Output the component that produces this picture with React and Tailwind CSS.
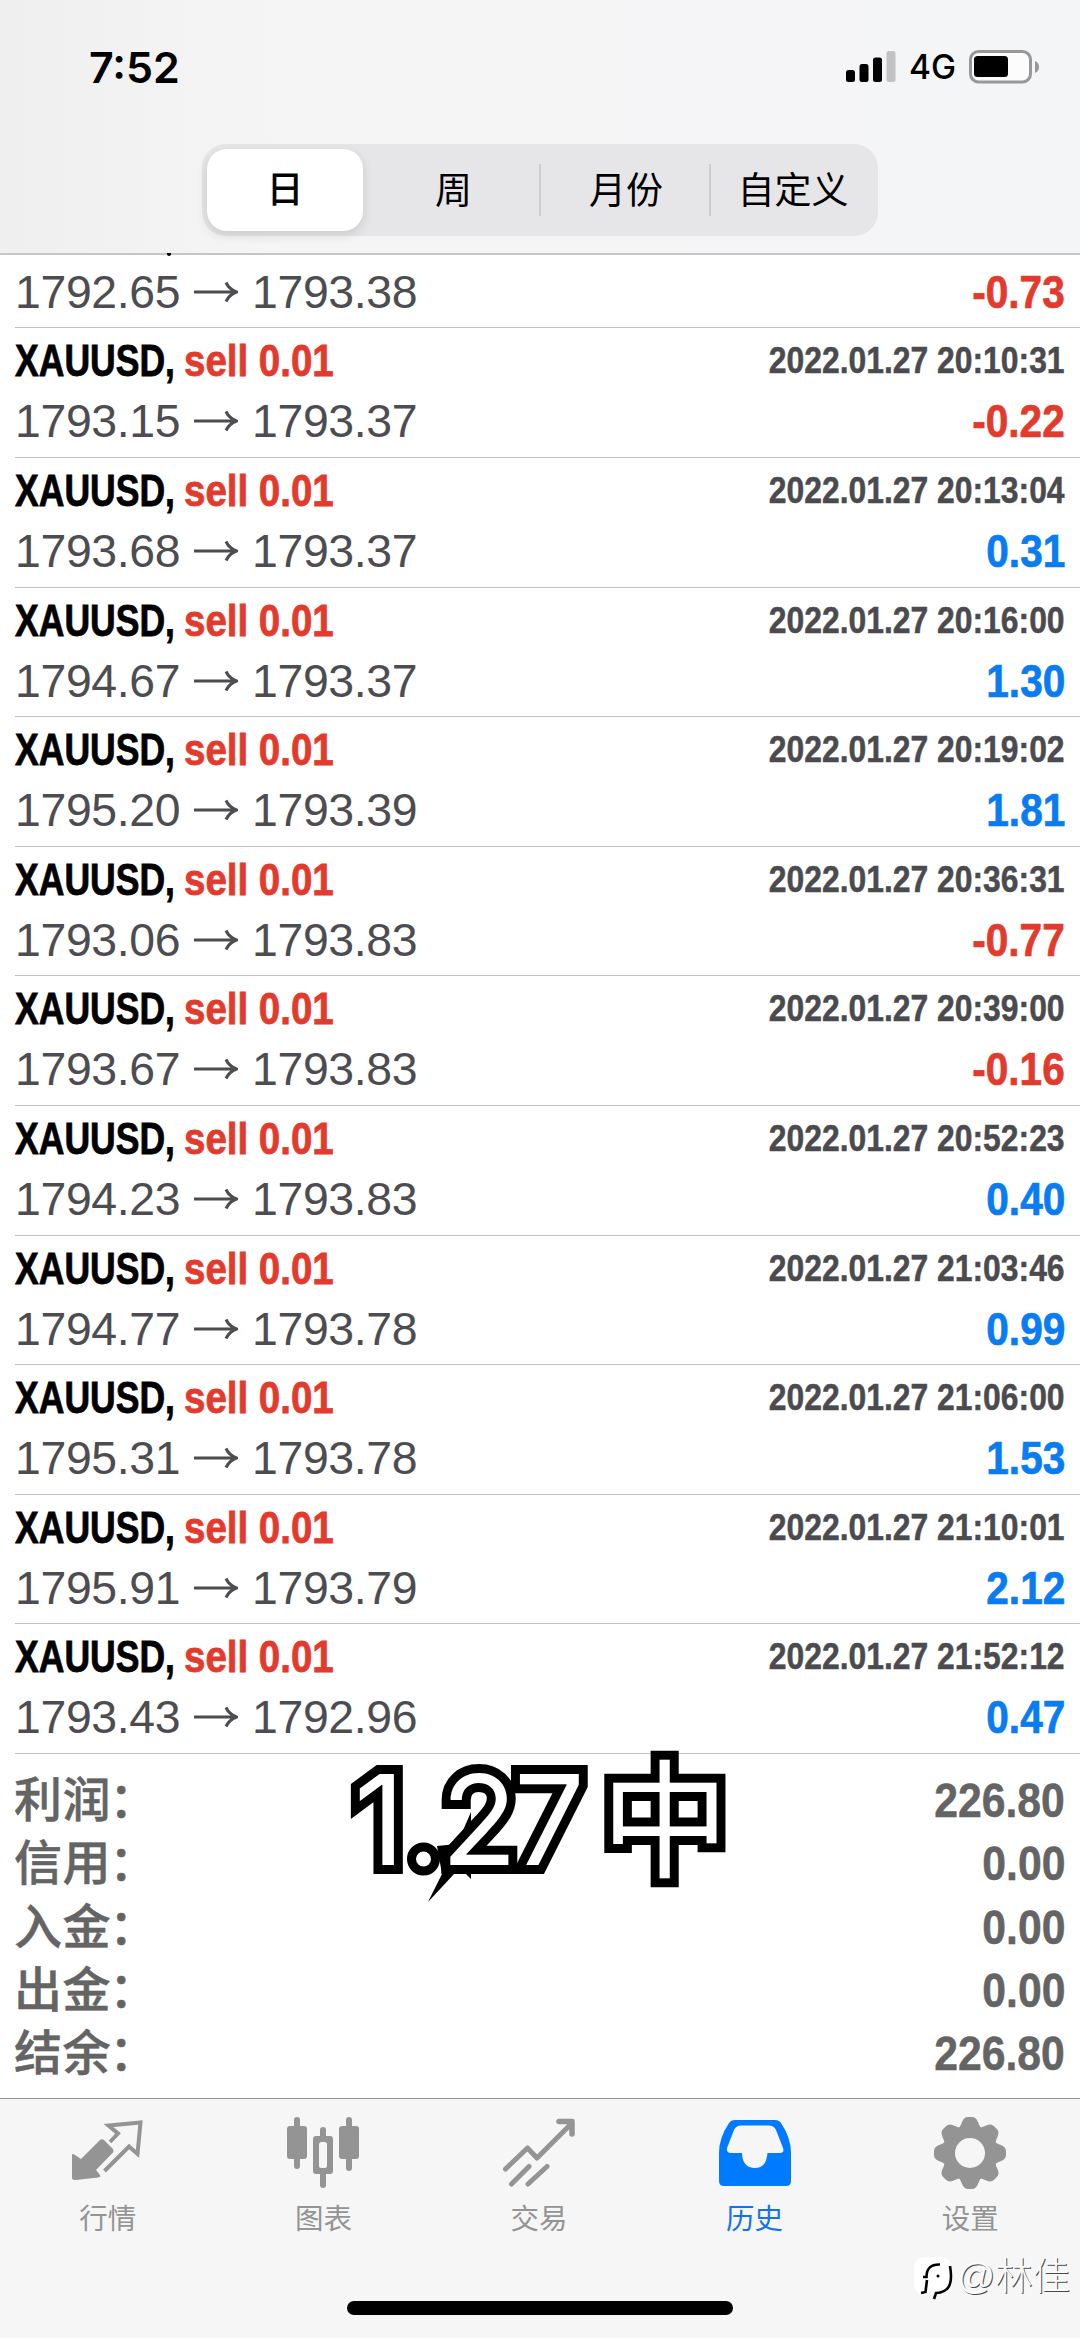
const ROWS = [
  ['1793.15', '1793.37', '20:10:31', '-0.22'],
  ['1793.68', '1793.37', '20:13:04', '0.31'],
  ['1794.67', '1793.37', '20:16:00', '1.30'],
  ['1795.20', '1793.39', '20:19:02', '1.81'],
  ['1793.06', '1793.83', '20:36:31', '-0.77'],
  ['1793.67', '1793.83', '20:39:00', '-0.16'],
  ['1794.23', '1793.83', '20:52:23', '0.40'],
  ['1794.77', '1793.78', '21:03:46', '0.99'],
  ['1795.31', '1793.78', '21:06:00', '1.53'],
  ['1795.91', '1793.79', '21:10:01', '2.12'],
  ['1793.43', '1792.96', '21:52:12', '0.47'],
];

const SUMMARY = [
  ['利润', '226.80'],
  ['信用', '0.00'],
  ['入金', '0.00'],
  ['出金', '0.00'],
  ['结余', '226.80'],
];

function Prices({ from, to, profit }) {
  return (
    <div className="flex h-[52px] items-center justify-between text-[46.4px] leading-[52px] text-[#4d4d51]">
      <div className="flex items-center">
        <span className="w-[168px] tracking-[-0.35px]">{from}</span>
        <svg className="ml-[11px] mr-[14px] shrink-0" width="44" height="22" viewBox="0 0 44 22" fill="none" stroke="currentColor" strokeWidth="3">
          <path d="M0 11H42M32 1.500Q35 8 42.500 11Q35 14 32 20.500" />
        </svg>
        <span className="tracking-[-0.35px]">{to}</span>
      </div>
      <span className={`origin-right scale-x-[0.875] font-bold [-webkit-text-stroke:0.7px_currentColor] ${profit[0] === '-' ? 'text-[#e23b2e]' : 'text-[#087cf0]'}`}>{profit}</span>
    </div>
  );
}

function Row({ row: [from, to, time, profit] }) {
  return (
    <div className="h-[129.6px] shrink-0 border-b border-[#c2c2c5] pr-[15px] pt-[6px]">
      <div className="flex h-[54px] items-center justify-between font-bold leading-[54px] [-webkit-text-stroke:0.8px_currentColor]">
        <div className="flex text-[45px]">
          <span className="w-[169px] origin-left scale-x-[0.79] whitespace-nowrap text-black">XAUUSD,</span>
          <span className="origin-left scale-x-[0.855] whitespace-nowrap text-[#e23b2e]">sell 0.01</span>
        </div>
        <span className="origin-right scale-x-[0.861] whitespace-nowrap pb-px text-[37px] leading-[53px] text-[#4b4b4f] [-webkit-text-stroke:0.5px_currentColor]">2022.01.27 {time}</span>
      </div>
      <div className="pt-[7px]"><Prices from={from} to={to} profit={profit} /></div>
    </div>
  );
}

function StatusBar() {
  return (
    <div className="flex h-[144px] items-start pl-[89px] pr-[41px] pt-[41px] font-['Inter']">
      <span className="text-[43px] font-semibold leading-[52px] text-black">7:52</span>
      <div className="ml-auto flex h-[52px] items-center">
        <svg width="50" height="34" viewBox="0 0 50 34">
          <rect x="0" y="20" width="9" height="12" rx="2.5" />
          <rect x="13.5" y="14" width="9" height="18" rx="2.5" />
          <rect x="27" y="7.5" width="9" height="24.5" rx="2.5" />
          <rect x="40.5" y="1" width="9" height="31" rx="2.5" fill="#c2c2c4" />
        </svg>
        <span className="ml-[13px] w-[46px] text-[33.5px] font-medium leading-[52px]">4G</span>
        <svg className="ml-[13px]" width="71" height="34" viewBox="0 0 71 34">
          <rect x="2.5" y="1.500" width="60" height="30.500" rx="8" fill="#fcfcfc" stroke="#98989a" strokeWidth="3" />
          <rect x="6" y="6" width="34" height="21" rx="3.500" />
          <path d="M67 11Q71 12.500 71 17Q71 21.500 67 23Z" fill="#98989a" />
        </svg>
      </div>
    </div>
  );
}

function Segments() {
  return (
    <div className="mx-auto flex h-[92px] w-[676px] items-center rounded-[24px] bg-[#e6e6e8] p-[5px] text-[37px] text-black">
      <div className="flex h-[82px] w-[156px] items-center justify-center rounded-[20px] bg-white pt-[2px] font-medium shadow-[0_4px_12px_rgba(0,0,0,0.12)]">日</div>
      <div className="flex h-[52px] w-[178px] items-center justify-center border-r-2 border-[#cdcdd0] pl-[5px] pt-[3px]">周</div>
      <div className="flex h-[52px] w-[170px] items-center justify-center border-r-2 border-[#cdcdd0] pl-[2px] pt-[3px]">月份</div>
      <div className="flex flex-1 items-center justify-center whitespace-nowrap pl-[2px] pt-[3px]">自定义</div>
    </div>
  );
}

function QuotesIcon() {
  return (
    <svg width="72" height="72" viewBox="0 0 72 72" fill="#949494">
      <path d="M28 23Q30 21.500 32 23L41 32Q42 34 41 35.500L24 53L28 58Q29 60 26 60.500L4 63Q0 63 0 61V38Q0 36 3 38L9 42Z" />
      <path d="M38 25L46 16.500L36.500 8.500L68.500 5.500L65.500 37L57 29.500L32.500 54" fill="none" stroke="#949494" strokeWidth="4" />
    </svg>
  );
}

function ChartIcon() {
  return (
    <svg width="72" height="74" viewBox="0 0 72 74" fill="#949494">
      <rect x="7" y="0" width="6" height="52" rx="3" />
      <rect x="0" y="9" width="20" height="33" rx="3" />
      <rect x="59" y="0" width="6" height="54" rx="3" />
      <rect x="52" y="9" width="20" height="33" rx="3" />
      <rect x="33" y="10" width="6" height="61" rx="3" />
      <rect x="26" y="19" width="20" height="38" rx="3" />
      <rect x="32" y="25" width="8" height="26" rx="2.500" fill="#f6f6f6" />
    </svg>
  );
}

function TradeIcon() {
  return (
    <svg width="72" height="74" viewBox="0 0 72 74" fill="none" stroke="#949494" strokeWidth="5" strokeLinecap="round" strokeLinejoin="round">
      <path d="M2.500 52L24.500 31L34 41L68.500 6.500" />
      <path d="M56 4.500H69V17" strokeWidth="5.500" />
      <path d="M8.500 67L26 49.500M25 67L44 49.500" />
    </svg>
  );
}

function HistoryIcon() {
  return (
    <svg width="72" height="74" viewBox="0 0 72 74">
      <path fillRule="evenodd" fill="#007aff" d="M16 3H56Q60 3 62 6Q72 21 72 36V64Q72 69 67 69H5Q0 69 0 64V36Q0 21 10 6Q12 3 16 3ZM22 8.500Q17 8.500 15 13L8 31Q7 36 12 36H23Q23.500 51 36 51Q47.500 51 48.500 36H60Q66 36 64 31L57 13Q55 8.500 50 8.500Z" />
    </svg>
  );
}

const TEETH = [0, 45, 90, 135, 180, 225, 270, 315];

function SettingsIcon() {
  return (
    <svg width="72" height="74" viewBox="-36 -36 72 74">
      <g fill="#949494">
        {TEETH.map((a) => (
          <path key={a} transform={`rotate(${a})`} d="M-14 -22Q-10 -25 -8 -31Q-6 -36 -2 -36H2Q6 -36 8 -31Q10 -25 14 -22L0 0Z" />
        ))}
        <circle r="26.500" />
      </g>
      <circle r="15" fill="#f6f6f6" />
    </svg>
  );
}

const TABS = [
  ['行情', QuotesIcon],
  ['图表', ChartIcon],
  ['交易', TradeIcon],
  ['历史', HistoryIcon],
  ['设置', SettingsIcon],
];

function Caption() {
  return (
    <svg className="absolute left-[340px] top-[1700px] overflow-visible" width="420" height="250" viewBox="0 -40 420 250">
      <path d="M88 162L102 134L97 106L117 104L131 72V139L126 134L114 134Z" />
      <g className="font-['Inter'] font-normal" fill="#fff" stroke="#000" strokeWidth="18" paintOrder="stroke" fontSize="125">
        <text x="14" y="125">1</text>
        <circle cx="83.500" cy="119" r="7.500" />
        <text x="101" y="125">2</text>
        <text x="174" y="125">7</text>
        <text className="font-['Noto_Sans_CJK_SC'] font-normal" x="261" y="128" fontSize="128">中</text>
      </g>
    </svg>
  );
}

function Watermark() {
  return (
    <div className="absolute left-[913px] top-[2251px] flex h-[50px] items-center">
      <svg className="mt-[6px] shrink-0" width="42" height="46" viewBox="0 0 42 46">
        <rect x="1" y="1" width="38" height="38" rx="11" fill="#fff" />
        <path d="M10 21H13.500Q13.500 8 27 8.500M14 24L12.500 36L8 37M37 10Q40 27 34 33Q29 37 23 37L21 43" fill="none" stroke="#000" strokeWidth="2.600" />
        <circle cx="25" cy="20" r="1.500" />
      </svg>
      <span className="ml-[2px] whitespace-nowrap text-[37.500px] font-light leading-[50px] text-[#fbfbfb] [text-shadow:1px_1px_0_#4a4a4a]">@林佳</span>
    </div>
  );
}

export default function App() {
  return (
    <div className="relative flex h-[2338px] w-[1080px] flex-col overflow-hidden bg-white font-['Liberation_Sans','Noto_Sans_CJK_SC',sans-serif]">
      <header className="h-[255px] shrink-0 border-b-2 border-[#c6c6c7] bg-linear-to-r from-[#efefef] via-[#f6f5f6] via-25% to-[#f4f5f7]">
        <StatusBar />
        <Segments />
      </header>
      <main className="flex h-[1499px] shrink-0 flex-col pl-[15px]">
        <div className="relative h-[73.400px] shrink-0 border-b border-[#c2c2c5] pr-[15px] pt-[11px]">
          <span className="absolute left-[152px] top-[-2px] h-[3px] w-[4px] rounded-b-full bg-black" />
          <Prices from="1792.65" to="1793.38" profit="-0.73" />
        </div>
        {ROWS.map((row) => <Row key={row[2]} row={row} />)}
      </main>
      <section className="flex h-[344px] shrink-0 flex-col pl-[14px] pr-[15px] pt-[15px] text-[#646464]">
        {SUMMARY.map(([label, value]) => (
          <div key={label} className="flex h-[63.300px] items-center justify-between">
            <span className="flex text-[48px] font-medium leading-[63px] tracking-[0.6px] [-webkit-text-stroke:0.5px_currentColor]">
              <span>{label}</span>
              <span className="-ml-[2px]">：</span>
            </span>
            <span className="origin-right scale-x-[0.89] text-[48px] font-bold leading-[63px] [-webkit-text-stroke:0.5px_currentColor]">{value}</span>
          </div>
        ))}
      </section>
      <nav className="flex flex-1 flex-col border-t border-[#8f8f92] bg-[#f6f6f6]">
        <div className="grid grid-cols-5 pr-[2px] pt-[18px]">
          {TABS.map(([label, Icon]) => (
            <div key={label} className="flex flex-col items-center">
              <div className="flex h-[76px] items-start"><Icon /></div>
              <span className={`mt-[6px] text-[28.500px] leading-[40px] ${label === '历史' ? 'text-[#1673e6]' : 'text-[#949494]'}`}>{label}</span>
            </div>
          ))}
        </div>
        <div className="mx-auto mb-[23px] mt-auto h-[14px] w-[386px] rounded-full bg-black" />
      </nav>
      <Caption />
      <Watermark />
    </div>
  );
}
